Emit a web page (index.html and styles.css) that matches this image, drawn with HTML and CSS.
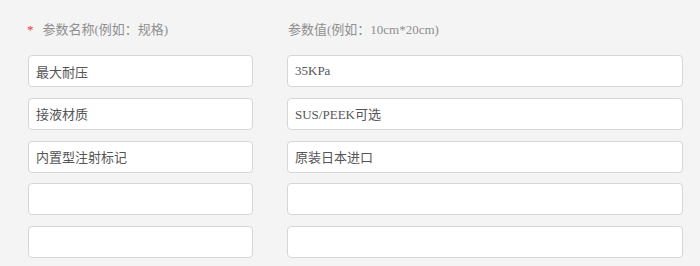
FILE: index.html
```html
<!DOCTYPE html>
<html lang="zh-CN">
<head>
    <meta charset="UTF-8">
    <title>参数设置</title>
    <link rel="stylesheet" href="styles.css">
</head>
<body>
    <div class="params">
        <div class="params-head">
            <label class="head-name"><span class="required">*</span>参数名称(例如：规格)</label>
            <label class="head-value">参数值(例如：10cm*20cm)</label>
        </div>
        <div class="params-grid">
            <input type="text" class="param-input" value="最大耐压">
            <input type="text" class="param-input" value="35KPa">
            <input type="text" class="param-input" value="接液材质">
            <input type="text" class="param-input" value="SUS/PEEK可选">
            <input type="text" class="param-input" value="内置型注射标记">
            <input type="text" class="param-input" value="原装日本进口">
            <input type="text" class="param-input" value="">
            <input type="text" class="param-input" value="">
            <input type="text" class="param-input" value="">
            <input type="text" class="param-input" value="">
        </div>
    </div>
</body>
</html>
```

FILE: styles.css
```css
body {
    margin: 0;
    background: #f4f4f4;
    font-family: "Liberation Serif", "Noto Sans CJK SC", serif;
    font-size: 13px;
}

.params {
    padding: 21px 0 0 28px;
}

.params-head {
    display: grid;
    grid-template-columns: 225px 396px;
    column-gap: 34px;
    line-height: 18px;
    margin-bottom: 16px;
    color: #8f8f8f;
}

.required {
    color: #e4393c;
    margin-right: 9px;
    margin-left: -1px;
}

.head-value {
    padding-left: 1px;
}

.params-grid {
    display: grid;
    grid-template-columns: 225px 396px;
    column-gap: 34px;
    row-gap: 10.75px;
}

.param-input {
    box-sizing: border-box;
    height: 32px;
    margin: 0;
    padding: 0 7px;
    border: 1px solid #d6d6d6;
    border-radius: 4px;
    background: #fff;
    color: #555;
    font-family: "Liberation Serif", "Noto Sans CJK SC", serif;
    font-size: 13px;
    outline: none;
}
```
